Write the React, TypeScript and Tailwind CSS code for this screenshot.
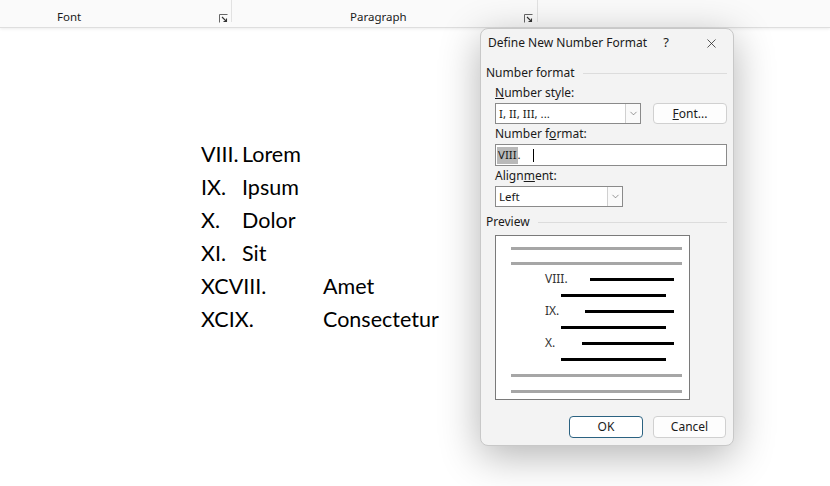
import { ChevronDown, X } from "lucide-react";

const ui = { fontFamily: '"Noto Sans", "Open Sans", sans-serif' };
const doc = { fontFamily: 'Lato, "Open Sans", sans-serif' };

function Launcher() {
  return (
    <svg width="9" height="9" viewBox="0 0 9 9">
      <path d="M0.5 8.5V0.5H8.5" fill="none" stroke="#666" strokeWidth="1" />
      <path d="M3 3L7.5 7.5M4.5 7.5H7.5V4.5" fill="none" stroke="#333" strokeWidth="1.1" />
    </svg>
  );
}

function SectionLabel({ text }: { text: string }) {
  return (
    <div className="flex items-center gap-2 h-4">
      <span>{text}</span>
      <div className="flex-1 h-px bg-[#dcdcdc]" />
    </div>
  );
}

function Select({ value, width }: { value: string; width: string }) {
  return (
    <div className={`flex h-[21px] ${width} bg-white border border-[#8a8a8a]`}>
      <div className="flex-1 flex items-center pl-[3px] text-[11.5px]">{value}</div>
      <div className="w-[15px] flex items-center justify-center border-l border-[#d0d0d0] bg-[#fafafa]">
        <ChevronDown size={11} strokeWidth={1.2} color="#444" />
      </div>
    </div>
  );
}

function PreviewRow({ label, start }: { label: string; start: string }) {
  return (
    <>
      <div className="flex items-center h-4 mt-[6px] pl-[49px] pr-[15px]">
        <span className="text-[12px] text-[#333]">{label}</span>
        <div className={`${start} flex-1 h-[3px] bg-black`} />
      </div>
      <div className="h-[3px] bg-black ml-[65px] mr-[23px] mt-[7px]" />
    </>
  );
}

export default function App() {
  const rows = [
    { n: "VIII.", t: "Lorem", w: "w-[41px]" },
    { n: "IX.", t: "Ipsum", w: "w-[41px]" },
    { n: "X.", t: "Dolor", w: "w-[41px]" },
    { n: "XI.", t: "Sit", w: "w-[41px]" },
    { n: "XCVIII.", t: "Amet", w: "w-[122px]" },
    { n: "XCIX.", t: "Consectetur", w: "w-[122px]" },
  ];

  return (
    <div className="relative w-[830px] h-[486px] overflow-hidden bg-white text-[#1a1a1a]" style={ui}>
      {/* ribbon group labels */}
      <div className="flex h-[28px] bg-[#fafafa] border-b border-[#dedede] shadow-[0_1px_3px_rgba(0,0,0,0.08)] text-[11.5px]">
        <div className="w-[232px] h-[22px] flex items-end border-r border-[#e2e2e2]">
          <span className="ml-[57px] flex-1 leading-4 -mb-[3px]">Font</span>
          <span className="mr-[3px] -mb-[1px]"><Launcher /></span>
        </div>
        <div className="w-[306px] h-[22px] flex items-end border-r border-[#e2e2e2]">
          <span className="ml-[118px] flex-1 leading-4 -mb-[3px]">Paragraph</span>
          <span className="mr-[4px] -mb-[1px]"><Launcher /></span>
        </div>
      </div>

      {/* document */}
      <div className="pt-[110px] pl-[201px] text-[21.5px] text-black" style={doc}>
        {rows.map((r) => (
          <div key={r.n} className="flex items-center h-[32.9px]">
            <span className={r.w}>{r.n}</span>
            <span>{r.t}</span>
          </div>
        ))}
      </div>

      {/* dialog */}
      <div className="absolute left-[480px] top-[28px] w-[254px] h-[418px] rounded-[8px] bg-[#f3f3f3] border border-[#c8c8c8] shadow-[0_10px_40px_rgba(0,0,0,0.3)] text-[12px] flex flex-col">
        <div className="flex items-center h-[28px] pl-[7px] pr-[14px]">
          <span className="flex-1 text-[12px]">Define New Number Format</span>
          <span className="mr-[35px] text-[13px]">?</span>
          <X size={15} strokeWidth={1.2} color="#222" />
        </div>

        <div className="pl-[5px] pr-[6px] mt-[8px]">
          <SectionLabel text="Number format" />
          <div className="pl-[9px]">
            <div className="mt-[4px] h-4 flex items-center">
              <span><span className="underline">N</span>umber style:</span>
            </div>
            <div className="mt-[2px] flex items-center">
              <Select value="I, II, III, ..." width="w-[146px]" />
              <div className="ml-[12px] flex-1 h-[21px] rounded-[4px] border border-[#d0d0d0] bg-[#fdfdfd] flex items-center justify-center">
                <span><span className="underline">F</span>ont...</span>
              </div>
            </div>
            <div className="mt-[2px] h-4 flex items-center">
              <span>Number f<span className="underline">o</span>rmat:</span>
            </div>
            <div className="mt-[2px] h-[22px] bg-white border border-[#8a8a8a] flex items-center pl-[1px] text-[11.5px]">
              <span className="bg-[#b9b9b9] px-[1px] h-[17px] flex items-center">VIII</span>
              <span>.</span>
              <span className="ml-[12px] w-px h-[13px] bg-black" />
            </div>
            <div className="mt-[2px] h-4 flex items-center">
              <span>Align<span className="underline">m</span>ent:</span>
            </div>
            <div className="mt-[2px]">
              <Select value="Left" width="w-[128px]" />
            </div>
          </div>

          <div className="mt-[7px]">
            <SectionLabel text="Preview" />
          </div>
          <div className="pl-[9px] mt-[5px]">
            <div className="w-[195px] h-[165px] bg-white border border-[#7a7a7a] flex flex-col pt-[11px]">
              <div className="h-[3px] bg-[#a6a6a6] ml-[15px] mr-[7px]" />
              <div className="h-[3px] bg-[#a6a6a6] ml-[15px] mr-[7px] mt-[12px]" />
              <PreviewRow label="VIII." start="ml-[22px]" />
              <PreviewRow label="IX." start="ml-[26px]" />
              <PreviewRow label="X." start="ml-[27px]" />
              <div className="h-[3px] bg-[#a6a6a6] ml-[15px] mr-[7px] mt-[13px]" />
              <div className="h-[3px] bg-[#a6a6a6] ml-[15px] mr-[7px] mt-[13px]" />
            </div>
          </div>
        </div>

        <div className="mt-auto mb-[7px] flex justify-end gap-[10px] pr-[7px]">
          <div className="w-[74px] h-[22px] rounded-[4px] border border-[#2b6281] bg-white flex items-center justify-center">OK</div>
          <div className="w-[73px] h-[22px] rounded-[4px] border border-[#d0d0d0] bg-[#fdfdfd] flex items-center justify-center">Cancel</div>
        </div>
      </div>
    </div>
  );
}
